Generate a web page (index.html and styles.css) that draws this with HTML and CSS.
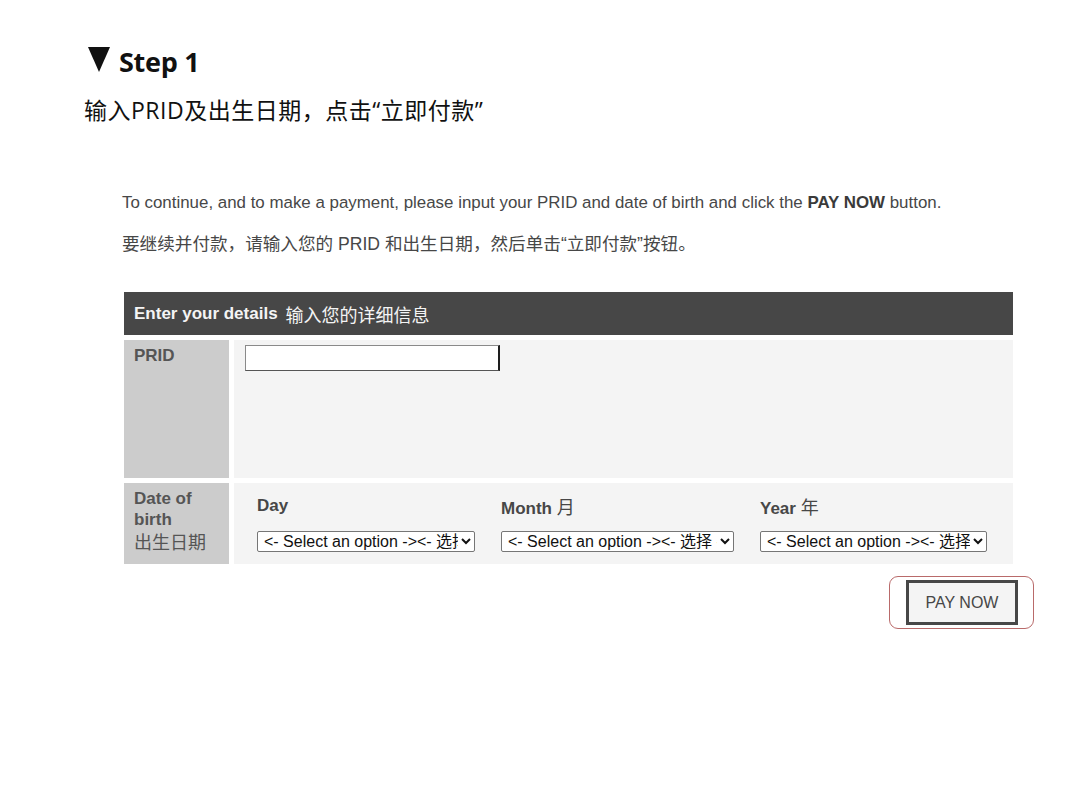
FILE: index.html
```html
<!DOCTYPE html>
<html lang="zh-CN">
<head>
<meta charset="utf-8">
<title>Step 1</title>
<link rel="stylesheet" href="styles.css">
</head>
<body>
<main class="page">
  <h1 class="step-title">
    <svg class="step-arrow" width="22" height="25" viewBox="0 0 22 25" aria-hidden="true"><polygon points="0,0 22,0 11,25" fill="#111"/></svg>
    <span class="step-name">Step 1</span>
  </h1>
  <p class="step-desc">输入PRID及出生日期，点击“立即付款”</p>

  <section class="payment">
    <p class="intro">To continue, and to make a payment, please input your PRID and date of birth and click the <b>PAY NOW</b> button.</p>
    <p class="intro intro-cn">要继续并付款，请输入您的 PRID 和出生日期，然后单击“立即付款”按钮。</p>

    <div class="details">
      <div class="details-head"><b>Enter your details</b><span class="cn">输入您的详细信息</span></div>

      <div class="details-row row-prid">
        <div class="row-label"><b>PRID</b></div>
        <div class="row-field">
          <input class="prid-input" type="text" aria-label="PRID">
        </div>
      </div>

      <div class="details-row row-dob">
        <div class="row-label"><b>Date of birth</b><span class="cn">出生日期</span></div>
        <div class="row-field dob-fields">
          <label class="dob-col col-day">
            <span class="dob-name"><b>Day</b></span>
            <select><option>&lt;- Select an option -&gt;&lt;- 选择 -&gt;</option></select>
          </label>
          <label class="dob-col col-month">
            <span class="dob-name"><b>Month</b> <span class="cn">月</span></span>
            <select><option>&lt;- Select an option -&gt;&lt;- 选择 -&gt;</option></select>
          </label>
          <label class="dob-col col-year">
            <span class="dob-name"><b>Year</b> <span class="cn">年</span></span>
            <select><option>&lt;- Select an option -&gt;&lt;- 选择 -&gt;</option></select>
          </label>
        </div>
      </div>
    </div>

    <div class="actions">
      <div class="pay-ring">
        <button class="pay-btn" type="button">PAY NOW</button>
      </div>
    </div>
  </section>
</main>
</body>
</html>
```

FILE: styles.css
```css
html, body {
  margin: 0;
  padding: 0;
  background: #ffffff;
}

.page {
  padding: 41px 0 0 84px;
  font-family: "Liberation Sans", Arial, "Noto Sans CJK SC", sans-serif;
}

/* Step heading */
.step-title {
  margin: 0;
  display: flex;
  align-items: center;
  gap: 9px;
  height: 40px;
  color: #111;
}

.step-arrow {
  display: block;
  margin: 0 0 4px 4px;
}

.step-name {
  font-family: "Open Sans", sans-serif;
  font-size: 27px;
  font-weight: 700;
  letter-spacing: -0.3px;
}

.step-desc {
  margin: 15px 0 0 0;
  font-family: "Open Sans", "Noto Sans CJK SC", sans-serif;
  font-size: 23px;
  line-height: 28px;
  letter-spacing: 0.5px;
  color: #111;
}

/* Payment block */
.payment {
  margin: 67px 0 0 38px;
  width: 912px;
  color: #474747;
}

.intro {
  margin: 0;
  font-size: 16.9px;
  line-height: 24px;
}

.intro b {
  color: #3a3a3a;
}

.intro-cn {
  margin-top: 17px;
  font-size: 17.6px;
}

.cn {
  font-family: "Noto Sans CJK SC", sans-serif;
  font-weight: normal;
}

.details {
  margin: 36px 0 0 2px;
  width: 889px;
  display: flex;
  flex-direction: column;
  gap: 5px;
}

.details-head {
  height: 43px;
  background: #474747;
  color: #f4f4f4;
  display: flex;
  align-items: center;
  gap: 8px;
  padding: 0 0 0 10px;
  font-size: 17px;
}

.details-head .cn {
  font-size: 18px;
}

.details-row {
  display: grid;
  grid-template-columns: 105px 1fr;
  column-gap: 5px;
}

.row-prid {
  height: 138px;
}

.row-dob {
  height: 81px;
}

.row-label {
  background: #cccccc;
  color: #555555;
  padding: 5px 10px 0 10px;
  font-size: 17px;
  line-height: 21px;
  display: flex;
  flex-direction: column;
}

.row-label .cn {
  font-size: 18px;
  line-height: 23px;
  color: #555;
}

.row-field {
  background: #f4f4f4;
  padding: 5px 0 0 11px;
}

.prid-input {
  display: block;
  box-sizing: border-box;
  width: 255px;
  height: 26px;
  margin: 0;
  padding: 0;
  background: #ffffff;
  border: 1px solid #8a8a8a;
  border-right: 2px solid #1e1e1e;
  border-bottom: 1px solid #555;
}

.dob-fields {
  display: flex;
  padding: 11px 0 0 23px;
}

.dob-col {
  display: flex;
  flex-direction: column;
  gap: 13px;
}

.col-day { width: 244px; }
.col-month { width: 259px; }
.col-year { width: 240px; }

.dob-name {
  font-size: 17px;
  line-height: 24px;
  height: 24px;
  color: #474747;
}

.dob-name .cn {
  font-size: 18px;
  line-height: 24px;
}

.dob-col select {
  box-sizing: border-box;
  height: 21px;
  font-family: "Liberation Sans", Arial, "Noto Sans CJK SC", sans-serif;
  font-size: 16px;
  color: #111;
  background: #ffffff;
  border: 1px solid #767676;
  border-radius: 2px;
  padding: 0 0 0 2px;
}

.col-day select { width: 218px; }
.col-month select { width: 233px; }
.col-year select { width: 227px; }

/* Pay button with its highlight ring */
.actions {
  display: flex;
  justify-content: flex-end;
  margin-top: 12px;
}

.pay-ring {
  padding: 3px 15px 3px 16px;
  border: 1px solid #b96a6a;
  border-radius: 9px;
}

.pay-btn {
  display: block;
  box-sizing: border-box;
  width: 112px;
  height: 45px;
  background: #f4f4f4;
  border: 3px solid #474747;
  border-radius: 0;
  color: #474747;
  font-family: "Liberation Sans", Arial, sans-serif;
  font-size: 16px;
  padding: 0;
}
```
